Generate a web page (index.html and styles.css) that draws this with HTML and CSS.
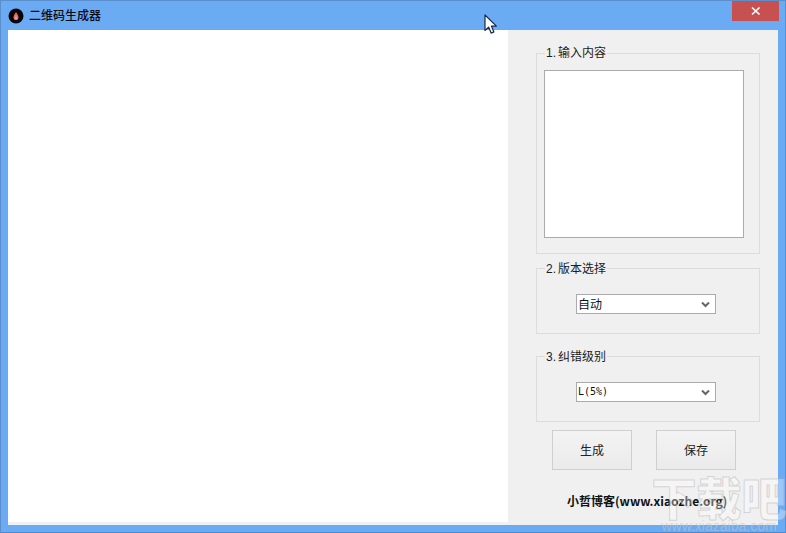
FILE: index.html
```html
<!DOCTYPE html>
<html lang="zh">
<head>
<meta charset="utf-8">
<title>二维码生成器</title>
<link rel="stylesheet" href="styles.css">
</head>
<body>
<div class="window">
  <header class="titlebar">
    <svg class="app-icon" width="16" height="16" viewBox="0 0 16 16"><circle cx="8" cy="8" r="7.500" fill="#0a0508"/><path d="M8 4C9.200 6 10.500 7.500 10.500 9.500a2.500 2.500 0 0 1-5 0C5.500 7.500 6.800 6 8 4z" fill="#e8704c"/><path d="M8 8c.8 1 1.300 1.500 1.300 2.300a1.300 1.300 0 0 1-2.600 0C6.700 9.500 7.200 9 8 8z" fill="#c9a0e8"/></svg>
    <span class="title">二维码生成器</span>
    <button class="close" type="button" aria-label="关闭">
      <svg width="10" height="10" viewBox="0 0 10 10"><path d="M1 1.500l7.500 7M8.500 1.500L1 8.500" stroke="#fff" stroke-width="1.700" fill="none"/></svg>
    </button>
  </header>
  <main class="client">
    <div class="canvas"></div>
    <aside class="panel">
      <fieldset class="group group-text">
        <legend><span class="num">1.</span>输入内容</legend>
        <div class="textbox"></div>
      </fieldset>
      <fieldset class="group group-select">
        <legend><span class="num">2.</span>版本选择</legend>
        <div class="select"><span>自动</span><svg width="9" height="7" viewBox="0 0 9 7"><path d="M1 1.500l3.500 3.500L8 1.500" stroke="#666" stroke-width="2" fill="none"/></svg></div>
      </fieldset>
      <fieldset class="group group-select">
        <legend><span class="num">3.</span>纠错级别</legend>
        <div class="select"><span class="mono">L(5%)</span><svg width="9" height="7" viewBox="0 0 9 7"><path d="M1 1.500l3.500 3.500L8 1.500" stroke="#666" stroke-width="2" fill="none"/></svg></div>
      </fieldset>
      <div class="actions">
        <button class="btn" type="button">生成</button>
        <button class="btn" type="button">保存</button>
      </div>
      <div class="credit">小哲博客(www.xiaozhe.org)</div>
    </aside>
  </main>
</div>
<svg class="cursor" width="14" height="21" viewBox="0 0 14 21"><path d="M1 1v15.500l3.600-3.400 2.500 6 2.800-1.200-2.500-5.800h5z" fill="#fff" stroke="#1a2a4a" stroke-width="1.200" stroke-linejoin="round"/></svg>
<div class="watermark"><span class="wm-big">下载吧</span><span class="wm-url">www.xiazaiba.com</span></div>
</body>
</html>
```
FILE: styles.css
```css
* { box-sizing: border-box; }
html, body { margin: 0; padding: 0; }
body {
  width: 786px;
  height: 533px;
  overflow: hidden;
  position: relative;
  font-family: "Noto Sans CJK SC", "Liberation Sans", sans-serif;
  font-size: 12px;
  color: #111;
}
.window {
  width: 786px;
  height: 533px;
  display: flex;
  flex-direction: column;
  background: #6aabf4;
  border: 1px solid #5a8fcc;
  border-bottom-color: #4f8ad0;
  padding: 0 7px 7px;
}
.titlebar {
  height: 29px;
  display: flex;
  align-items: center;
  flex: none;
}
.app-icon { flex: none; }
.title {
  margin-left: 5px;
  font-size: 12px;
  font-weight: 500;
  line-height: 16px;
  padding-bottom: 2px;
  color: #0a0a14;
}
.close {
  margin-left: auto;
  margin-right: -1px;
  align-self: flex-start;
  width: 47px;
  height: 20px;
  padding: 0;
  border: 0;
  background: #c75050;
  display: flex;
  align-items: center;
  justify-content: center;
}
.client {
  flex: 1;
  display: flex;
  min-height: 0;
}
.canvas {
  flex: none;
  width: 500px;
  background: #fff;
  border-bottom: 3px solid #eef2f8;
}
.panel {
  flex: 1;
  min-width: 0;
  background: #f0f0f0;
  padding: 15px 0 0 28px;
  display: flex;
  flex-direction: column;
}
.group {
  margin: 0;
  border: 1px solid #dcdcdc;
  padding: 0;
  width: 224px;
  min-width: 0;
}
.group legend {
  margin-left: 8px;
  padding: 0 1px;
  font-size: 12px;
  height: 16px;
  line-height: 14px;
  color: #1c1c1c;
}
.group-select legend { line-height: 16px; }
.num {
  display: inline-block;
  width: 12px;
  font-family: "Liberation Sans", sans-serif;
  font-size: 12px;
}
.group-text { height: 209px; }
.group-select { height: 74px; margin-top: 6px; }
.group-select + .group-select { margin-top: 14px; }
.textbox {
  width: 200px;
  height: 168px;
  margin: 9px 0 0 7px;
  background: #fff;
  border: 1px solid #ababab;
}
.select {
  width: 140px;
  height: 20px;
  margin: 18px 0 0 39px;
  background: #fff;
  border: 1px solid #ababab;
  display: flex;
  align-items: center;
  justify-content: space-between;
  padding: 0 5px 0 1px;
  line-height: 16px;
}
.mono { font-family: "DejaVu Sans Mono", monospace; font-size: 10px; }
.actions {
  display: flex;
  gap: 24px;
  margin: 8px 0 0 16px;
}
.btn {
  width: 80px;
  height: 40px;
  padding: 0 0 2px;
  border: 1px solid #cfcfcf;
  background: linear-gradient(#f3f3f3, #ebebeb);
  font: inherit;
  color: #222;
}
.credit {
  margin-top: 23px;
  margin-left: 31px;
  font-size: 12px;
  font-weight: 700;
  line-height: 16px;
  white-space: nowrap;
  color: #111;
}
.cursor { position: absolute; left: 484px; top: 14px; }
.watermark {
  position: absolute;
  left: 652px;
  top: 473px;
  width: 134px;
  display: flex;
  flex-direction: column;
  align-items: center;
  pointer-events: none;
}
.wm-big {
  font-size: 45px;
  line-height: 47px;
  font-weight: 900;
  color: rgba(255,255,255,.35);
  -webkit-text-stroke: 1px rgba(175,175,175,.45);
  white-space: nowrap;
}
.wm-url {
  font-family: "Liberation Sans", sans-serif;
  font-size: 14px;
  line-height: 13px;
  color: rgba(200,200,200,.55);
  white-space: nowrap;
}
```
